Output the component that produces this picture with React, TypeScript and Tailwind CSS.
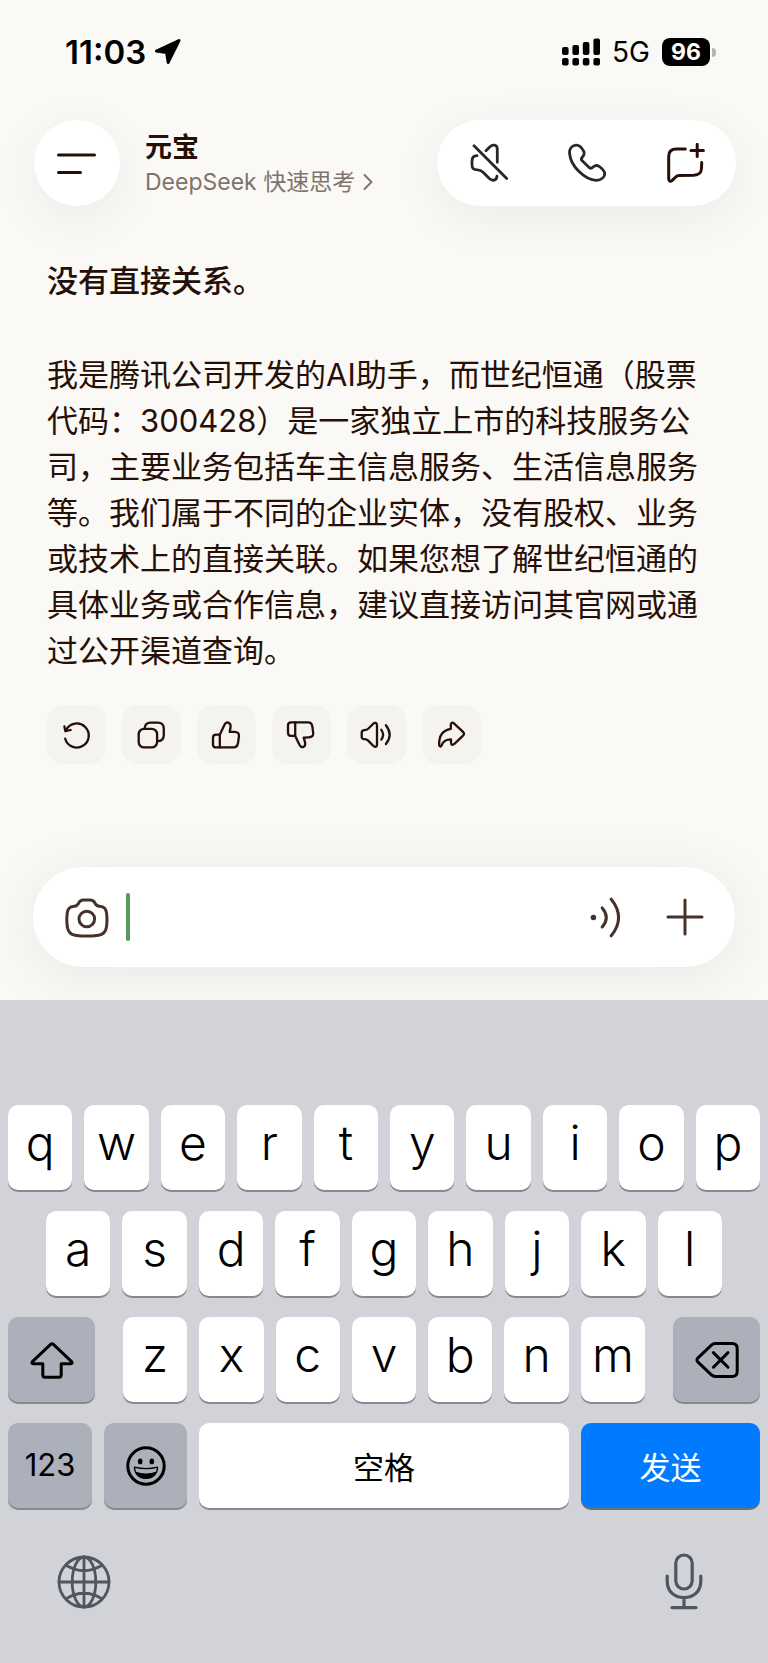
import React from "react";

const ROW_ONE = ["q", "w", "e", "r", "t", "y", "u", "i", "o", "p"];
const ROW_TWO = ["a", "s", "d", "f", "g", "h", "j", "k", "l"];
const ROW_THREE = ["z", "x", "c", "v", "b", "n", "m"];

type IconProps = { className: string; box: string; width?: number; children: React.ReactNode };

function Icon({ className, box, width = 3, children }: IconProps) {
  return (
    <svg
      viewBox={box}
      className={className}
      fill="none"
      stroke="currentColor"
      strokeWidth={width}
      strokeLinecap="round"
      strokeLinejoin="round"
      aria-hidden="true"
    >
      {children}
    </svg>
  );
}

function StatusBar() {
  return (
    <div className="flex h-[104px] items-center justify-between pr-[52px] pl-[65px] text-black">
      <div className="flex items-center gap-2">
        <span className="text-[33px] leading-10 font-semibold">11:03</span>
        <Icon className="h-[28px] w-[28px]" box="0 0 28 28" width={3}>
          <path d="M25 2.6 14.2 24.4 12.6 14.4 2.4 13Z" fill="currentColor" />
        </Icon>
      </div>
      <div className="flex items-center">
        <svg viewBox="0 0 40 28" className="h-[28px] w-[40px]" fill="currentColor" aria-hidden="true">
          <rect x="0" y="9" width="6.6" height="8" rx="2" />
          <rect x="10.4" y="7" width="6.6" height="10" rx="2" />
          <rect x="20.8" y="4" width="6.6" height="13" rx="2" />
          <rect x="31.4" y="0.6" width="6.6" height="16.4" rx="2" />
          <rect x="0" y="20" width="6.6" height="7.4" rx="2" />
          <rect x="10.4" y="20" width="6.6" height="7.4" rx="2" />
          <rect x="20.8" y="20" width="6.6" height="7.4" rx="2" />
          <rect x="31.4" y="20" width="6.6" height="7.4" rx="2" />
        </svg>
        <span className="ml-[10px] text-[28px] leading-8">5G</span>
        <span className="ml-3 flex h-7 w-12 items-center justify-center rounded-[8px] bg-black text-[23px] leading-7 font-bold text-white">
          96
        </span>
        <span className="ml-[2px] h-[9px] w-1 rounded-r-full bg-[#b5b4b2]" />
      </div>
    </div>
  );
}

function Header() {
  return (
    <header className="flex items-center justify-between px-8 pt-4">
      <div className="flex items-center gap-[25px] pl-[2px]">
        <button
          type="button"
          aria-label="菜单"
          className="flex size-[86px] items-center justify-center rounded-full bg-white shadow-[0_12px_48px_rgba(70,60,30,0.07)]"
        >
          <Icon className="h-[24px] w-[40px]" box="0 0 40 24" width={3}>
            <path d="M1.5 4H37.5M1.5 21.5H23.5" />
          </Icon>
        </button>
        <div className="flex flex-col pt-1">
          <h1 className="text-[27px] leading-[34px] font-bold">元宝</h1>
          <button type="button" className="flex items-center gap-2 text-[23px] leading-[34px] text-[#80736b]">
            DeepSeek 快速思考
            <Icon className="h-[18px] w-[10px]" box="0 0 10 18" width={2}>
              <path d="M1.5 2 8.5 9 1.5 16" />
            </Icon>
          </button>
        </div>
      </div>
      <div className="flex h-[86px] items-center gap-[60px] rounded-full bg-white pr-[31px] pl-[33px] shadow-[0_12px_48px_rgba(70,60,30,0.07)]">
        <button type="button" aria-label="静音" className="text-[#26272a]">
          <Icon className="h-[40px] w-[38px]" box="0 0 38 40" width={2.8}>
            <path d="M4 2.7 36.7 35.6" />
            <path d="M16 7.7 20.2 3.6C22.5 1.2 27.3 1.4 27.3 6.2V19.3" />
            <path d="M27 33.2C26.6 37.6 22.6 38.4 19.3 35.5L12.8 29C11 27.2 10.2 26.8 7.5 26.8 3.6 26.8 2 25.6 2 21.8V18C2 14.4 3.6 12.8 7 12.7" />
          </Icon>
        </button>
        <button type="button" aria-label="通话" className="text-[#26272a]">
          <Icon className="h-[40px] w-[38px]" box="0 0 38 40" width={2.8}>
            <path d="M8 2.1C3.6 2.6 1.2 6.2 1.6 10.5 2.2 17 5.5 23 10.5 28 16 33.4 23 37.4 28.5 37.3 33 37 36.7 34.4 36.7 30.5 36.7 28 34.6 26.2 32.3 24.2 30 22.2 27.4 22 25.4 23.8 23.8 25.4 22.9 25.9 21.4 24.7L14 17.6C12.8 16.3 13.1 15.5 14.4 14 16.5 11.8 16.9 10.4 15.5 7.8 13.6 4.4 11.4 1.8 8 2.1Z" />
          </Icon>
        </button>
        <button type="button" aria-label="新对话">
          <Icon className="h-[40px] w-[39px]" box="0 0 39 40" width={3}>
            <path d="M19.3 6H10.5C5 6 2.7 8.2 2.7 13.2V35.6C2.7 38.4 4.4 39 6.2 37.4L9.4 34.2C10.8 32.8 11.4 32.6 13.3 32.5L27.8 32.3C33.3 32 35.3 30 35.5 25L35.7 19.5" />
            <path d="M31.2 1.4V13.6M25 7.4H37.4" />
          </Icon>
        </button>
      </div>
    </header>
  );
}

const ACTIONS: { label: string; art: React.ReactNode }[] = [
  {
    label: "重新生成",
    art: (
      <>
        <path d="M18.2 33.7A12 12 0 1 0 19.2 24.8" />
        <path d="M17.4 21.4 18.4 26.2 23.6 25" />
      </>
    ),
  },
  {
    label: "复制",
    art: (
      <>
        <rect x="16.7" y="23.8" width="18.4" height="18.6" rx="5.4" />
        <path d="M22.6 23.4C23 19.4 24.8 17.7 28.4 17.7H35.4C40 17.7 41.8 19.4 41.8 24V30C41.8 34 40.4 35.8 36.2 36.2" />
      </>
    ),
  },
  {
    label: "赞",
    art: (
      <>
        <path d="M22.8 29.7 27.6 19.6C29.4 16 33.6 17.4 33.6 21.2 33.6 23.4 33 24.8 32.7 26.8H37.6C40.8 26.8 42.3 28.6 41.9 31.6L41 38C40.5 41 39.4 42.4 36.6 42.4H19C17 42.4 16 41.4 16 39.4V32.8C16 30.8 17 29.7 19 29.7Z" />
        <path d="M22.8 29.7V42.4" />
      </>
    ),
  },
  {
    label: "踩",
    art: (
      <>
        <path d="M23.2 30.9 27.6 40C29.4 43.4 33.2 42.4 33.2 38.8 33.2 36.6 32.2 34.8 31.7 32.7L36.8 32.4C40 32.2 41.6 30.8 41.2 27.8L40.4 21.8C40 18.6 39 17.4 36 17.4H19C17 17.4 16 18.4 16 20.4V27.8C16 29.8 17 30.9 19 30.9Z" />
        <path d="M23.2 17.4V30.9" />
      </>
    ),
  },
  {
    label: "朗读",
    art: (
      <>
        <path d="M14.7 28C14.7 26 15.6 25.2 17.4 25.2 19.6 25.2 20 25 21.2 23.8L26.2 18.8C28 17 30 17.8 30 20.2V39.4C30 41.8 28 42.6 26.2 40.8L21.2 35.6C20 34.4 19.6 34.2 17.4 34.2 15.6 34.2 14.7 33.4 14.7 31.4Z" />
        <path d="M34.3 24.8Q37.8 29.7 34.3 34.6M38.9 20.2Q46.4 29.6 38.9 39" />
      </>
    ),
  },
  {
    label: "分享",
    art: (
      <path d="M28.8 23.8V20C28.8 17.6 30.4 17 32.2 18.6L40.8 26.6C42.4 28.2 42.4 29.2 40.8 30.8L32.4 38.8C30.6 40.6 29 39.8 29 37.6V34.4C24 34.4 20.8 36.8 19.6 40.4 19 42 17.3 41.8 17.2 40 16.8 31.4 20.6 25.2 28.8 23.8Z" />
    ),
  },
];

function Conversation() {
  return (
    <main className="flex-1 pt-[52px] pr-[56px] pb-6 pl-[47px]">
      <div className="text-[31px] leading-[46px]">
        <p className="font-medium">没有直接关系。</p>
        <p className="mt-12">
          我是腾讯公司开发的AI助手，而世纪恒通（股票代码：300428）是一家独立上市的科技服务公司，主要业务包括车主信息服务、生活信息服务等。我们属于不同的企业实体，没有股权、业务或技术上的直接关联。如果您想了解世纪恒通的具体业务或合作信息，建议直接访问其官网或通过公开渠道查询。
        </p>
      </div>
      <div className="mt-[31px] flex gap-4">
        {ACTIONS.map((action) => (
          <button key={action.label} type="button" aria-label={action.label} className="size-[59px] rounded-2xl bg-[#f4f3ef]">
            <Icon className="size-full" box="0 0 59 59" width={2.3}>
              {action.art}
            </Icon>
          </button>
        ))}
      </div>
    </main>
  );
}

function Composer() {
  return (
    <div className="px-[33px] pb-[33px]">
      <form
        className="flex h-[100px] items-center rounded-full bg-white pr-[30px] pl-8 text-[#46322a] shadow-[0_8px_56px_rgba(70,60,30,0.09)]"
        onSubmit={(event) => event.preventDefault()}
      >
        <button type="button" aria-label="拍照">
          <Icon className="h-[41px] w-[44px]" box="0 0 44 41" width={3}>
            <path d="M18.4 3H25C27.4 3 28.8 3.8 29.8 5.8 31 8.4 31.8 9 34.4 9.2 39.6 9.6 41 11.6 41.6 16.4 42.2 21.6 42.2 25.4 41.4 30.2 40.6 35.2 38.4 37.4 33.6 38.2 25.6 39.4 17.8 39.4 10 38.2 5.2 37.4 3.2 35.2 2.4 30.2 1.6 25.4 1.6 21.6 2.2 16.4 2.8 11.6 4.2 9.6 9.4 9.2 12 9 12.6 8.4 13.8 5.8 14.8 3.8 16 3 18.4 3Z" />
            <circle cx="21.8" cy="22" r="7.8" />
          </Icon>
        </button>
        <span className="ml-[17px] h-12 w-1 rounded-full bg-[#539c5c]" />
        <input aria-label="输入消息" className="h-12 min-w-0 flex-1 bg-transparent text-[31px] outline-none" />
        <button type="button" aria-label="语音输入">
          <Icon className="h-[41px] w-[34px]" box="0 0 34 41" width={3}>
            <circle cx="5.4" cy="20.5" r="2.8" fill="currentColor" stroke="none" />
            <path d="M14.2 10.9Q22.4 20.4 14.2 30M23.2 2.2Q38 20.4 23.2 38.8" />
          </Icon>
        </button>
        <button type="button" aria-label="更多" className="ml-[43px]">
          <Icon className="size-10" box="0 0 40 40" width={3}>
            <path d="M20 3V37M3 20H37" />
          </Icon>
        </button>
      </form>
    </div>
  );
}

function LetterKeys({ letters }: { letters: string[] }) {
  return (
    <>
      {letters.map((letter) => (
        <button
          key={letter}
          type="button"
          className="flex h-[85px] min-w-0 flex-1 items-center justify-center rounded-[10px] bg-white pb-2.5 text-[48px] leading-none font-light shadow-[0_2px_0_#898a8d]"
        >
          {letter}
        </button>
      ))}
    </>
  );
}

const GREY_KEY =
  "flex h-[85px] items-center justify-center rounded-[10px] bg-[#abb0ba] shadow-[0_2px_0_#898a8d]";

function Keyboard() {
  return (
    <section aria-label="键盘" className="bg-[#d1d3d9] pt-[105px] text-black">
      <div className="flex flex-col gap-[21px] px-2">
        <div className="flex gap-3">
          <LetterKeys letters={ROW_ONE} />
        </div>
        <div className="flex gap-3 px-[38px]">
          <LetterKeys letters={ROW_TWO} />
        </div>
        <div className="flex gap-7">
          <button type="button" aria-label="大写" className={`${GREY_KEY} w-[87px]`}>
            <Icon className="h-[44px] w-[46px]" box="0 0 46 44" width={3}>
              <path d="M21.6 6.4Q23 5 24.4 6.4L42.6 23.6Q44 25.6 41.6 25.8H32.2V37Q32.2 39.2 30 39.2H16Q13.8 39.2 13.8 37V25.8H4.4Q2 25.6 3.4 23.6Z" />
            </Icon>
          </button>
          <div className="flex min-w-0 flex-1 gap-3">
            <LetterKeys letters={ROW_THREE} />
          </div>
          <button type="button" aria-label="删除" className={`${GREY_KEY} w-[87px]`}>
            <Icon className="h-[44px] w-[46px]" box="0 0 46 44" width={3}>
              <path d="M21.4 5.5H38.2Q43.2 5.5 43.2 10.5V33.5Q43.2 38.5 38.2 38.5H21.4Q19 38.5 17.4 36.9L4 24.2Q2 22 4 19.8L17.4 7.1Q19 5.5 21.4 5.5Z" />
              <path d="M19.4 14.6 34 29.2M34 14.6 19.4 29.2" />
            </Icon>
          </button>
        </div>
        <div className="grid grid-cols-[84fr_83fr_370fr_179fr] gap-3">
          <button type="button" className={`${GREY_KEY} text-[31px]`}>
            123
          </button>
          <button type="button" aria-label="表情" className={GREY_KEY}>
            <Icon className="size-10" box="0 0 40 40" width={3}>
              <circle cx="20" cy="20" r="18.2" />
              <ellipse cx="14.2" cy="15.4" rx="2.3" ry="2.9" fill="currentColor" stroke="none" />
              <ellipse cx="25.8" cy="15.4" rx="2.3" ry="2.9" fill="currentColor" stroke="none" />
              <path d="M8.4 21.2Q20 24.2 31.6 21.2C31.2 28.6 26.4 32.4 20 32.4S8.8 28.6 8.4 21.2Z" strokeWidth="1.3" />
              <path d="M9.2 25.4Q20 29.4 30.8 25.4C29 30.2 25 32.6 20 32.6S11 30.2 9.2 25.4Z" fill="currentColor" stroke="none" />
            </Icon>
          </button>
          <button
            type="button"
            className="flex h-[85px] items-center justify-center rounded-[10px] bg-white pt-1.5 text-[31px] shadow-[0_2px_0_#898a8d]"
          >
            空格
          </button>
          <button
            type="submit"
            className="flex h-[85px] items-center justify-center rounded-[10px] bg-[#007aff] pt-1.5 text-[31px] text-white shadow-[0_2px_0_#6b6f78]"
          >
            发送
          </button>
        </div>
      </div>
      <div className="flex h-[155px] items-center justify-between pr-[60px] pb-2 pl-[56px] text-[#50565c]">
        <button type="button" aria-label="切换键盘">
          <Icon className="size-14" box="0 0 56 56" width={2.8}>
            <circle cx="28" cy="28" r="25" />
            <ellipse cx="28" cy="28" rx="11.8" ry="25" />
            <path d="M28 3V53M3 28H53M10.5 11.5Q28 22 45.5 11.5M10.5 44.5Q28 34 45.5 44.5" />
          </Icon>
        </button>
        <button type="button" aria-label="听写">
          <Icon className="h-[60px] w-[48px]" box="0 0 48 60" width={3.2}>
            <rect x="15.8" y="3" width="16.4" height="34" rx="8.2" />
            <path d="M7.2 24V29C7.2 39.4 14.2 45.6 24 45.6S40.8 39.4 40.8 29V24M24 45.6V55.4M12 55.6H36" />
          </Icon>
        </button>
      </div>
    </section>
  );
}

export default function App() {
  return (
    <div
      lang="zh-CN"
      className="flex min-h-screen flex-col bg-[#faf9f6] font-[Inter,'Noto_Sans_CJK_SC',sans-serif] text-[#260f06]"
    >
      <StatusBar />
      <Header />
      <Conversation />
      <Composer />
      <Keyboard />
    </div>
  );
}
